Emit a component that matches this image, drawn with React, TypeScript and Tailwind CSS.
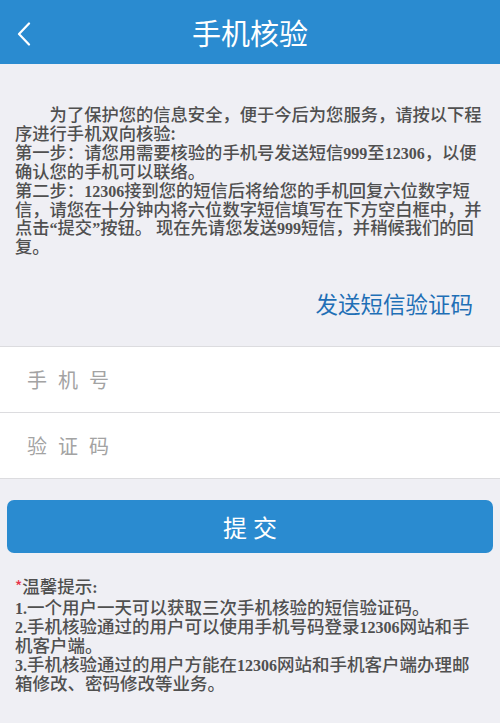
import React from "react";

function L({ children }: { children: React.ReactNode }) {
  return (
    <span className="font-['Liberation_Serif'] font-bold text-[16px] leading-[0]">
      {children}
    </span>
  );
}

export default function App() {
  return (
    <div className="w-[500px] min-h-[723px] bg-[#efeff4] font-['Noto_Sans_CJK_SC','Noto_Sans',sans-serif]">
      <header className="relative h-[64px] bg-[#2a8bd0] flex items-center justify-center">
        <button className="absolute left-[14px] top-[21px] w-[20px] h-[26px] flex items-center justify-center">
          <svg width="14" height="24" viewBox="0 0 14 24" fill="none">
            <path d="M12 1.5 L2 12 L12 22.5" stroke="white" strokeWidth="2.2" strokeLinecap="round" strokeLinejoin="round" />
          </svg>
        </button>
        <h1 className="text-white text-[29px] leading-[34px] font-normal">手机核验</h1>
      </header>

      <div className="pl-[15px] pr-[15px] pt-[41px] text-[17.3px] leading-[18.9px] text-[#505050] font-medium">
        <p className="indent-[34.6px]">
          为了保护您的信息安全，便于今后为您服务，请按以下程序进行手机双向核验:
        </p>
        <p>
          第一步：请您用需要核验的手机号发送短信<L>999</L>至<L>12306</L>，以便确认您的手机可以联络。
        </p>
        <p>
          第二步：<L>12306</L>接到您的短信后将给您的手机回复六位数字短信，请您在十分钟内将六位数字短信填写在下方空白框中，并点击<L>“</L>提交<L>”</L>按钮。<L> </L>现在先请您发送<L>999</L>短信，并稍候我们的回复。
        </p>
      </div>

      <div className="flex justify-end pr-[27px] mt-[32px]">
        <span className="text-[22.5px] leading-[30px] text-[#1f6fb6]">发送短信验证码</span>
      </div>

      <div className="mt-[28px] border-t border-[#dcdcdf] bg-white">
        <div className="h-[66px] flex items-center pl-[27px] border-b border-[#dcdcdf]">
          <span className="text-[20px] tracking-[11px] text-[#a3a3a3]">手机号</span>
        </div>
        <div className="h-[66px] flex items-center pl-[27px] border-b border-[#dcdcdf]">
          <span className="text-[20px] tracking-[11px] text-[#a3a3a3]">验证码</span>
        </div>
      </div>

      <div className="px-[7px] mt-[21px]">
        <button className="w-full h-[53px] rounded-[7px] bg-[#2a8bd0] flex items-center justify-center">
          <span className="text-white text-[24px] tracking-[6px] pl-[6px]">提交</span>
        </button>
      </div>

      <div className="pl-[15px] pr-[30px] mt-[24px] text-[17.5px] leading-[18.9px] text-[#505050] font-medium">
        <p className="mb-[2px]">
          <span className="text-[#e8334a] text-[15px] leading-[0] align-[1px]">*</span>温馨提示<L>:</L>
        </p>
        <p><L>1.</L>一个用户一天可以获取三次手机核验的短信验证码。</p>
        <p><L>2.</L>手机核验通过的用户可以使用手机号码登录<L>12306</L>网站和手机客户端。</p>
        <p><L>3.</L>手机核验通过的用户方能在<L>12306</L>网站和手机客户端办理邮箱修改、密码修改等业务。</p>
      </div>
    </div>
  );
}
